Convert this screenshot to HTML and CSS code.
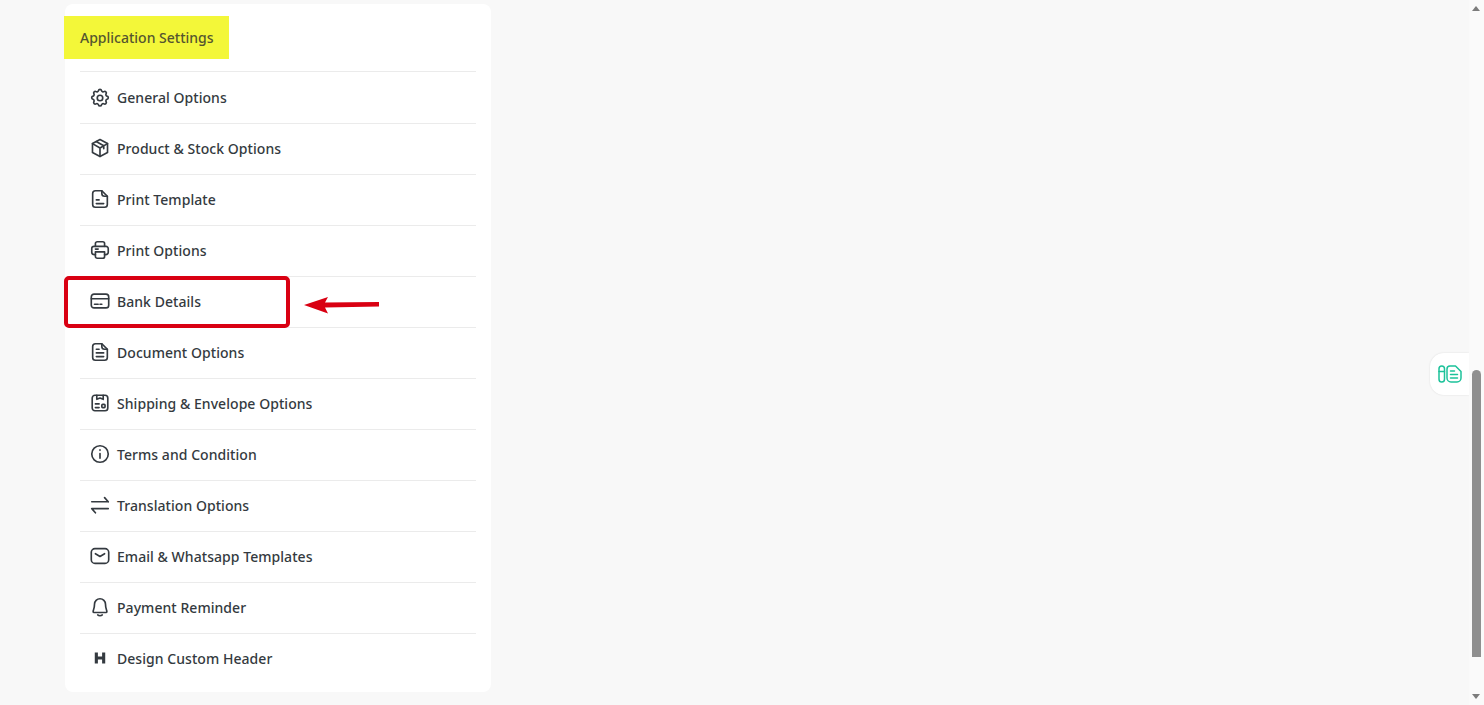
FILE: index.html
```html
<!DOCTYPE html>
<html lang="en">
<head>
    <meta charset="UTF-8">
    <title>Application Settings</title>
    <link rel="stylesheet" href="styles.css">
</head>
<body>
    <main class="page">
        <section class="card">
            <h2 class="card-title">Application Settings</h2>
            <ul class="menu">
                <li class="menu-item">
                    <svg class="icon" viewBox="0 0 24 24"><path d="M10.3 3.900c.4-1.800 3-1.800 3.400 0a1.700 1.700 0 0 0 2.600 1.100c1.500-.9 3.300.8 2.400 2.400a1.700 1.700 0 0 0 1 2.600c1.800.4 1.800 3 0 3.400a1.700 1.700 0 0 0-1 2.600c.9 1.500-.9 3.300-2.400 2.400a1.700 1.700 0 0 0-2.600 1c-.4 1.800-3 1.800-3.400 0a1.700 1.700 0 0 0-2.600-1c-1.500.9-3.300-.9-2.400-2.400a1.700 1.700 0 0 0-1-2.600c-1.800-.4-1.800-3 0-3.400a1.700 1.700 0 0 0 1-2.600c-.9-1.600.9-3.300 2.400-2.400a1.700 1.700 0 0 0 2.600-1.100z"/><circle cx="12" cy="12" r="3"/></svg>
                    General Options
                </li>
                <li class="menu-item">
                    <svg class="icon" viewBox="0 0 24 24"><path d="M12 2.800l8.200 4.400v9.600L12 21.200l-8.200-4.400V7.200z"/><path d="M3.800 7.200L12 12l8.200-4.800M12 12v9.200M7.800 5l8.300 4.600v3.200"/></svg>
                    Product &amp; Stock Options
                </li>
                <li class="menu-item">
                    <svg class="icon" viewBox="0 0 24 24"><path d="M14 3H7a3 3 0 0 0-3 3v12a3 3 0 0 0 3 3h10a3 3 0 0 0 3-3V9z"/><path d="M14 3v3a3 3 0 0 0 3 3h3M8 13h3M8 17h8"/></svg>
                    Print Template
                </li>
                <li class="menu-item">
                    <svg class="icon" viewBox="0 0 24 24"><path d="M7 8V5a2 2 0 0 1 2-2h6a2 2 0 0 1 2 2v3"/><path d="M7 17H5.500A2.500 2.500 0 0 1 3 14.500v-4A2.500 2.500 0 0 1 5.500 8h13a2.500 2.500 0 0 1 2.500 2.500v4a2.500 2.500 0 0 1-2.500 2.500H17"/><path d="M7 14h10v5a2 2 0 0 1-2 2H9a2 2 0 0 1-2-2zM7 11h3"/></svg>
                    Print Options
                </li>
                <li class="menu-item">
                    <svg class="icon" viewBox="0 0 24 24"><rect x="2.500" y="4.500" width="19" height="15" rx="3"/><path d="M2.500 9.500h19M6 15.500h4M12 15.500h2"/></svg>
                    Bank Details
                </li>
                <li class="menu-item">
                    <svg class="icon" viewBox="0 0 24 24"><path d="M14 3H7a3 3 0 0 0-3 3v12a3 3 0 0 0 3 3h10a3 3 0 0 0 3-3V9z"/><path d="M14 3v3a3 3 0 0 0 3 3h3M8 9h3M8 13h8M8 17h8"/></svg>
                    Document Options
                </li>
                <li class="menu-item">
                    <svg class="icon" viewBox="0 0 24 24"><rect x="3.500" y="3.500" width="17" height="17" rx="3"/><path d="M8.500 3.500v4.500l3.500-1.500 3.500 1.500V3.500M7 13h4M7 17h4"/><rect x="14" y="13.500" width="3.500" height="3.500" rx="1"/></svg>
                    Shipping &amp; Envelope Options
                </li>
                <li class="menu-item">
                    <svg class="icon" viewBox="0 0 24 24"><circle cx="12" cy="12" r="9"/><path d="M12 11.500v5M12 7.500v.5"/></svg>
                    Terms and Condition
                </li>
                <li class="menu-item">
                    <svg class="icon" viewBox="0 0 24 24"><path d="M3 8.500h18M17 4l4 4.500M3 16h18M3 16l4 4.500"/></svg>
                    Translation Options
                </li>
                <li class="menu-item">
                    <svg class="icon" viewBox="0 0 24 24"><rect x="2.500" y="4" width="19" height="16" rx="4"/><path d="M7 9.500l5 3 5-3"/></svg>
                    Email &amp; Whatsapp Templates
                </li>
                <li class="menu-item">
                    <svg class="icon" viewBox="0 0 24 24"><path d="M12 3a6 6 0 0 0-6 6c0 5-1.500 6.500-1.500 7.800 0 .7.400 1.200 1 1.200h13c.6 0 1-.5 1-1.200 0-1.300-1.500-2.800-1.500-7.800a6 6 0 0 0-6-6z"/><path d="M9.500 20.700c1.200 1 3.800 1 5 0"/></svg>
                    Payment Reminder
                </li>
                <li class="menu-item">
                    <svg class="icon icon-bold" viewBox="0 0 24 24"><path d="M8 6v12M16 6v12M8 12h8"/></svg>
                    Design Custom Header
                </li>
            </ul>
        </section>

        <div class="callout"></div>
        <svg class="callout-arrow" viewBox="0 0 78 20"><path d="M1 10L25 2l-3 5.500 54-.5v4.500L22 12.500l3 6z"/></svg>

        <div class="side-tab">
            <svg viewBox="0 0 24 20"><rect x="1" y="2" width="5.500" height="16" rx="2.750"/><path d="M1 7.500h5.500"/><path d="M12 2h5.500L23 7.500V14a4 4 0 0 1-4 4h-6a4 4 0 0 1-4-4V5a3 3 0 0 1 3-3z"/><path d="M12.500 7h4M12.500 10.500h7M12.500 14h7"/></svg>
        </div>
    </main>

    <div class="scrollbar">
        <span class="arrow-up"></span>
        <div class="thumb"></div>
        <span class="arrow-down"></span>
    </div>
</body>
</html>
```

FILE: styles.css
```css
html, body {
    height: 100%;
}
body {
    margin: 0;
    display: flex;
    overflow: hidden;
    background-color: #f8f8f8;
    font-family: "Noto Sans", "Open Sans", sans-serif;
    color: #343a40;
}
.page {
    position: relative;
    flex: 1;
    padding: 4px 0 0 65px;
}
.card {
    width: 426px;
    height: 688px;
    box-sizing: border-box;
    padding-top: 12px;
    background-color: #fff;
    border-radius: 8px;
}
.card-title {
    width: fit-content;
    margin: 0 0 12px -1px;
    padding: 0 15px 0 16px;
    background-color: #f3f739;
    font-size: 14px;
    font-weight: 500;
    line-height: 43px;
    color: #55552f;
}
.menu {
    list-style: none;
    margin: 0 15px;
    padding: 0;
}
.menu-item {
    display: flex;
    align-items: center;
    gap: 6px;
    height: 48px;
    padding: 0 0 2px 9px;
    border-top: 1px solid #ebebeb;
    font-size: 14px;
    font-weight: 500;
    letter-spacing: 0.05px;
}
.menu-item:first-child {
    height: 51px;
    padding-bottom: 0;
}
.icon {
    flex: none;
    width: 22px;
    height: 22px;
    fill: none;
    stroke: #343a40;
    stroke-width: 1.800;
    stroke-linecap: round;
    stroke-linejoin: round;
}
.icon-bold {
    stroke-width: 3.400;
    stroke-linecap: butt;
}
.callout {
    position: absolute;
    left: 64px;
    top: 276px;
    width: 226px;
    height: 52px;
    box-sizing: border-box;
    border: 4px solid #d90012;
    border-radius: 5px;
}
.callout-arrow {
    position: absolute;
    left: 303px;
    top: 295px;
    width: 78px;
    height: 20px;
    fill: #d90012;
}
.side-tab {
    position: absolute;
    right: 0;
    top: 353px;
    display: flex;
    align-items: center;
    justify-content: center;
    width: 39px;
    height: 42px;
    background-color: #fff;
    border-radius: 14px 0 0 14px;
    box-shadow: 0 0 2px rgba(0,0,0,0.12);
}
.side-tab svg {
    width: 24px;
    height: 20px;
    fill: none;
    stroke: #1cc29a;
    stroke-width: 1.500;
    stroke-linejoin: round;
    stroke-linecap: round;
}
.scrollbar {
    position: relative;
    flex: none;
    width: 15px;
    background-color: #fafafa;
}
.thumb {
    position: absolute;
    left: 3px;
    top: 370px;
    width: 9px;
    height: 287px;
    background-color: #8f8f8f;
    border-radius: 5px 5px 0 0;
}
.arrow-up, .arrow-down {
    position: absolute;
    left: 3px;
    border-left: 4.500px solid transparent;
    border-right: 4.500px solid transparent;
}
.arrow-up {
    top: 6px;
    border-bottom: 5px solid #7c7c7c;
}
.arrow-down {
    bottom: 6px;
    border-top: 5px solid #7c7c7c;
}
```
